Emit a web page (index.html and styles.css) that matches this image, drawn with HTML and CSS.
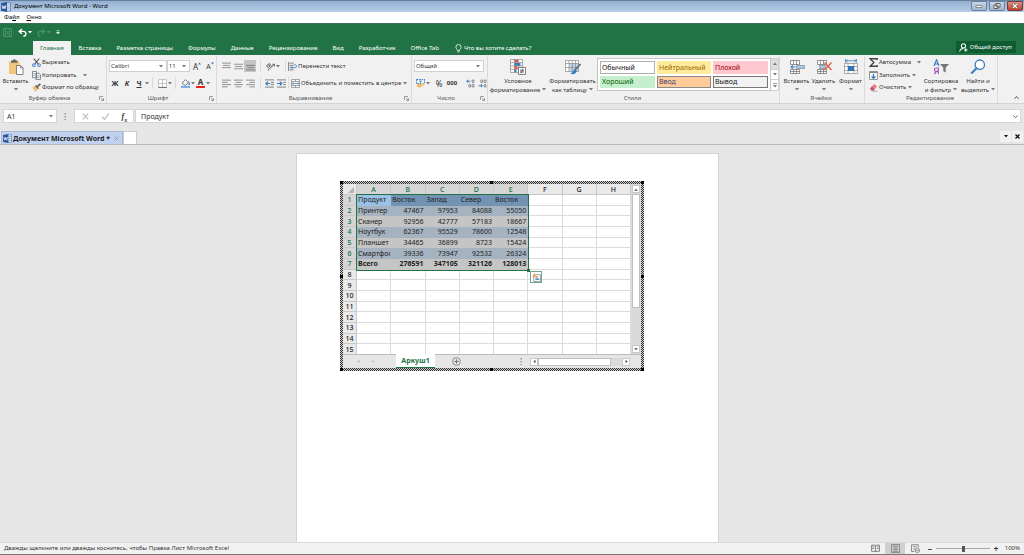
FILE: index.html
```html
<!DOCTYPE html>
<html lang="ru">
<head>
<meta charset="utf-8">
<title>Документ Microsoft Word - Word</title>
<link rel="stylesheet" href="styles.css">
</head>
<body>
<svg class="defs" aria-hidden="true">
  <symbol id="caret" viewBox="0 0 4 3"><path d="M0 0h4L2 2.5z" fill="#777"/></symbol>
  <symbol id="word" viewBox="0 0 10 10"><path d="M5 1h4.5v8H5z" fill="#fff" stroke="#2b579a" stroke-width=".6"/><path d="M6 3h3M6 5h3M6 7h3" stroke="#2b579a" stroke-width=".6"/><path d="M0 1.200 6 0v10L0 8.800z" fill="#2b579a"/><path d="M1 3.300 2 6.800 3 3.800 4 6.800 5 3.300" fill="none" stroke="#fff" stroke-width=".8"/></symbol>
  <symbol id="launch" viewBox="0 0 5 5"><path d="M.5 4V.5H4M2 2l2.300 2.300M4.500 2.200v2.300H2.200" fill="none" stroke="#777" stroke-width=".7"/></symbol>
  <symbol id="cells" viewBox="0 0 16 16"><path d="M1.500 1.500h9v4h-9zM4.500 1.500v4M7.500 1.500v4M1.500 10.500h9v4h-9zM4.500 10.500v4M7.500 10.500v4M1.500 12.500h9" fill="#fff" stroke="#777" stroke-width=".8"/></symbol>
</svg>

<header class="titlebar">
  <svg class="i10"><use href="#word"/></svg>
  <h1 class="title">Документ Microsoft Word - Word</h1>
  <div class="winbtns">
    <button class="winbtn" aria-label="Свернуть"><svg viewBox="0 0 8 6"><path d="M1 2.500h6v2H1z" fill="#fff" stroke="#555" stroke-width=".6"/></svg></button>
    <button class="winbtn" aria-label="Восстановить"><svg viewBox="0 0 8 6"><path d="M3 .5h4v3.500H3zM1 2h4v3.500H1z" fill="#fff" stroke="#444" stroke-width=".8"/></svg></button>
    <button class="winbtn close" aria-label="Закрыть"><svg viewBox="0 0 8 6"><path d="M2 1l4 4M6 1 2 5" stroke="#444" stroke-width="2.200"/><path d="M2 1l4 4M6 1 2 5" stroke="#fff" stroke-width="1.300"/></svg></button>
  </div>
</header>

<nav class="menubar"><button>Фа<u>й</u>л</button><button><u>О</u>кно</button></nav>

<div class="green">
  <div class="qat">
    <button aria-label="Сохранить"><svg class="i8" viewBox="0 0 8 8"><path d="M.5.5h7v7h-7zM2 .5v3h4v-3M2 7.500V5h4v2.500" fill="none" stroke="#5c9a76" stroke-width=".7"/></svg></button>
    <button aria-label="Отменить"><svg class="i8" viewBox="0 0 8 8"><path d="M3.500.8 1 3l2.500 2.200M1.200 3h3.600c3 0 3 4 0 4.300" fill="none" stroke="#fff" stroke-width="1.200"/></svg><svg class="car" viewBox="0 0 4 3"><path d="M0 0h4L2 2.500z" fill="#fff"/></svg></button>
    <button aria-label="Вернуть"><svg class="i8" viewBox="0 0 8 8"><path d="M4.500.8 7 3 4.500 5.200M6.800 3H3.200c-3 0-3 4 0 4.300" fill="none" stroke="#4f9069" stroke-width="1"/></svg><svg class="car" viewBox="0 0 4 3"><path d="M0 0h4L2 2.500z" fill="#4f9069"/></svg></button>
    <button aria-label="Настройка панели"><svg class="car tall" viewBox="0 0 4 5"><path d="M.5.500h3M.5 2.200h3L2 4z" stroke="#fff" stroke-width=".5" fill="#fff"/></svg></button>
  </div>
  <nav class="tabs">
    <button class="tab active">Главная</button>
    <button class="tab">Вставка</button>
    <button class="tab">Разметка страницы</button>
    <button class="tab">Формулы</button>
    <button class="tab">Данные</button>
    <button class="tab">Рецензирование</button>
    <button class="tab">Вид</button>
    <button class="tab">Разработчик</button>
    <button class="tab">Office Tab</button>
    <button class="tab tell"><svg class="i8" viewBox="0 0 8 8"><path d="M3 5.800C3 4.500 1.700 4.300 1.700 2.700a2.300 2.300 0 0 1 4.600 0C6.300 4.300 5 4.500 5 5.800zM3 7h2" fill="none" stroke="#fff" stroke-width=".7"/></svg>Что вы хотите сделать?</button>
    <button class="share"><svg class="i8" viewBox="0 0 8 8"><circle cx="4" cy="2.500" r="1.900" fill="none" stroke="#fff" stroke-width=".9"/><path d="M.7 7.800C.7 5.800 2 4.800 4 4.800M6 4.600v3.200M4.400 6.200h3.200" fill="none" stroke="#fff" stroke-width=".9"/></svg>Общий доступ</button>
  </nav>
</div>

<main class="ribbon">
  <section class="group g-clip">
    <div class="body">
      <button class="big w-paste"><svg class="i16" viewBox="0 0 16 16"><path d="M1 2.500h10.500V15H1z" fill="#f0c67c"/><path d="M3 1.500h1.700a1.600 1.600 0 0 1 3.100 0h1.700v2.300H3z" fill="#666"/><path d="M8.500 6.500h4l2.500 2.500v6.500H8.500z" fill="#fff" stroke="#666" stroke-width=".8"/><path d="M12.500 6.500V9H15" fill="none" stroke="#666" stroke-width=".7"/></svg><span>Вставить</span><svg class="car"><use href="#caret"/></svg></button>
      <div class="list">
        <button><svg class="i8" viewBox="0 0 8 8"><path d="M1.500.5l4.200 5M6.500.5 2.300 5.500" stroke="#555" stroke-width=".9"/><circle cx="1.700" cy="6.300" r="1.200" fill="none" stroke="#4a86c5" stroke-width=".9"/><circle cx="6.300" cy="6.300" r="1.200" fill="none" stroke="#4a86c5" stroke-width=".9"/></svg>Вырезать</button>
        <button><svg class="i8" viewBox="0 0 8 8"><path d="M.5.5H4v5.500H.5zM3.500 2h2.700L7.500 3.300v4.200h-4z" fill="#fff" stroke="#666" stroke-width=".7"/><path d="M1.300 2.300h1.500M1.300 3.800h1.500M4.300 4.300h2.400M4.300 5.800h2.400" stroke="#4a86c5" stroke-width=".6"/></svg>Копировать<svg class="car far"><use href="#caret"/></svg></button>
        <button><svg class="i8" viewBox="0 0 8 8"><path d="M.3 4 3 2.200l2.500 3L3.200 7.800z" fill="#f0c06c"/><path d="M3.200 2.200 5.800 5" stroke="#555" stroke-width="1.300"/><path d="M5 3 7.500.8" stroke="#555" stroke-width="1.400"/></svg>Формат по образцу</button>
      </div>
    </div>
    <footer><h2>Буфер обмена</h2><svg class="i5"><use href="#launch"/></svg></footer>
  </section>

  <section class="group g-font">
    <div class="body rows">
      <div class="row">
        <span class="sel w59"><select aria-label="Шрифт"><option>Calibri</option></select><svg class="car"><use href="#caret"/></svg></span><span class="sel w23"><select aria-label="Размер"><option>11</option></select><svg class="car"><use href="#caret"/></svg></span>
        <button class="ib grow">A<svg class="i3" viewBox="0 0 3 3"><path d="M0 2.500 1.500.5 3 2.500z" fill="#3a7cc0"/></svg></button><button class="ib grow small">A<svg class="i3" viewBox="0 0 3 3"><path d="M0 .5h3L1.500 2.500z" fill="#3a7cc0"/></svg></button>
      </div>
      <div class="row">
        <button class="ib b">Ж</button><button class="ib b it">К</button><button class="ib b un">Ч</button><svg class="car"><use href="#caret"/></svg><i class="sep"></i>
        <button class="ib" aria-label="Границы"><svg class="i8" viewBox="0 0 8 8"><path d="M.5.5h7v7h-7zM4 .5v7M.5 4h7" fill="#fff" stroke="#aaa" stroke-width=".6"/><path d="M.3 7.500h7.400" stroke="#666" stroke-width=".8"/></svg></button><svg class="car"><use href="#caret"/></svg><i class="sep"></i>
        <button class="ib" aria-label="Заливка"><svg class="i8" viewBox="0 0 8 8"><path d="M1 3.500 4 .7l2.700 2.600-3 2.400z" fill="#fff" stroke="#666" stroke-width=".8"/><path d="M6.300 2.500c1.300.5 1.400 2 .8 3" fill="none" stroke="#4a86c5"/><path d="M0 6h8v2H0z" fill="#7fb2e0"/></svg></button><svg class="car"><use href="#caret"/></svg>
        <button class="ib fc" aria-label="Цвет текста">A</button><svg class="car"><use href="#caret"/></svg>
      </div>
    </div>
    <footer><h2>Шрифт</h2><svg class="i5"><use href="#launch"/></svg></footer>
  </section>

  <section class="group g-align">
    <div class="body rows">
      <div class="row">
        <button class="ib" aria-label="Вверх"><svg class="i8" viewBox="0 0 8 8"><path d="M0 1h8M1 3h6M0 5h8" stroke="#888" stroke-width=".8"/></svg></button><button class="ib" aria-label="Середина"><svg class="i8" viewBox="0 0 8 8"><path d="M0 2h8M1 4h6M0 6h8" stroke="#888" stroke-width=".8"/></svg></button><button class="ib on" aria-label="Вниз"><svg class="i8" viewBox="0 0 8 8"><path d="M0 3h8M1 5h6M0 7h8" stroke="#777" stroke-width=".8"/></svg></button><i class="sep"></i>
        <button class="ib" aria-label="Ориентация"><svg class="i8" viewBox="0 0 8 8"><path d="M1.500 7.500 7.500 2M7.500 4V2h-2" fill="none" stroke="#777" stroke-width=".9"/><circle cx="2" cy="3.500" r="1.200" fill="none" stroke="#555" stroke-width=".8"/><path d="M2.500.8 5 4" stroke="#555" stroke-width=".8"/></svg></button><svg class="car"><use href="#caret"/></svg><i class="sep push"></i>
        <button class="txt"><svg class="i8" viewBox="0 0 8 8"><path d="M.5 0v8M1.500 1H5M1.500 3H5M1.500 7H5" stroke="#777" stroke-width=".8"/><path d="M1.500 5h5c1.500 0 1.500-2.500 0-2.500H5.500M4 3.800 2.500 5 4 6.200" fill="none" stroke="#4a86c5" stroke-width=".8"/></svg>Перенести текст</button>
      </div>
      <div class="row">
        <button class="ib" aria-label="Влево"><svg class="i8" viewBox="0 0 8 8"><path d="M0 1h8M0 3h5M0 5h8M0 7h5" stroke="#888" stroke-width=".8"/></svg></button><button class="ib" aria-label="По центру"><svg class="i8" viewBox="0 0 8 8"><path d="M0 1h8M1.500 3h5M0 5h8M1.500 7h5" stroke="#888" stroke-width=".8"/></svg></button><button class="ib" aria-label="Вправо"><svg class="i8" viewBox="0 0 8 8"><path d="M0 1h8M3 3h5M0 5h8M3 7h5" stroke="#888" stroke-width=".8"/></svg></button><i class="sep"></i>
        <button class="ib" aria-label="Уменьшить отступ"><svg class="i8" viewBox="0 0 8 8"><path d="M0 .8h8M5 3h3M5 5h3M0 7.200h8" stroke="#777" stroke-width=".8"/><path d="M4.500 4H1M2.500 2.300.7 4l1.800 1.700" fill="none" stroke="#3a7cc0" stroke-width="1.100"/></svg></button><button class="ib" aria-label="Увеличить отступ"><svg class="i8" viewBox="0 0 8 8"><path d="M0 .8h8M5.500 3H8M5.500 5H8M0 7.200h8" stroke="#777" stroke-width=".8"/><path d="M0 4h4M2.500 2.300 4.300 4 2.500 5.700" fill="none" stroke="#3a7cc0" stroke-width="1.100"/></svg></button><i class="sep push"></i>
        <button class="txt"><svg class="i8" viewBox="0 0 8 8"><path d="M.5.5h7v7h-7zM.5 2.300h7M.5 5.700h7M4 .5v1.800M4 5.700v1.800" fill="#fff" stroke="#888" stroke-width=".7"/><path d="M1 4h6M2 3 1 4l1 1M6 3l1 1-1 1" fill="none" stroke="#4a86c5" stroke-width=".7"/></svg>Объединить и поместить в центре<svg class="car far"><use href="#caret"/></svg></button>
      </div>
    </div>
    <footer><h2>Выравнивание</h2><svg class="i5"><use href="#launch"/></svg></footer>
  </section>

  <section class="group g-num">
    <div class="body rows">
      <div class="row"><span class="sel fill"><select aria-label="Формат числа"><option>Общий</option></select><svg class="car"><use href="#caret"/></svg></span></div>
      <div class="row">
        <button class="ib" aria-label="Денежный"><svg class="i8" viewBox="0 0 8 8"><path d="M.5.5h7v3.500h-7z" fill="#fff" stroke="#4a86c5" stroke-dasharray="1.500 .7"/><circle cx="4" cy="2.300" r="1" fill="#4a86c5"/><ellipse cx="3" cy="6" rx="2.300" ry="1.500" fill="#efb75c"/><ellipse cx="6" cy="5" rx="1.700" ry="1.200" fill="#f4cd86"/></svg></button><svg class="car"><use href="#caret"/></svg><button class="ib pct">%</button><button class="ib zer">000</button><i class="sep"></i>
        <button class="ib" aria-label="Увеличить разрядность"><svg class="i8" viewBox="0 0 8 8"><path d="M4 2H.8M2 .8.7 2 2 3.200" fill="none" stroke="#4a86c5" stroke-width=".9"/><ellipse cx="6.300" cy="2" rx=".9" ry="1.300" fill="none" stroke="#666" stroke-width=".7"/><ellipse cx="3.300" cy="6" rx=".9" ry="1.300" fill="none" stroke="#666" stroke-width=".7"/><ellipse cx="6.300" cy="6" rx=".9" ry="1.300" fill="none" stroke="#666" stroke-width=".7"/></svg></button>
        <button class="ib" aria-label="Уменьшить разрядность"><svg class="i8" viewBox="0 0 8 8"><path d="M.5 6h3.200M2.500 4.800 3.800 6 2.500 7.200" fill="none" stroke="#4a86c5" stroke-width=".9"/><ellipse cx="6.300" cy="2" rx=".9" ry="1.300" fill="none" stroke="#666" stroke-width=".7"/><ellipse cx="3.300" cy="2" rx=".9" ry="1.300" fill="none" stroke="#666" stroke-width=".7"/><ellipse cx="6.300" cy="6" rx=".9" ry="1.300" fill="none" stroke="#666" stroke-width=".7"/></svg></button>
      </div>
    </div>
    <footer><h2>Число</h2><svg class="i5"><use href="#launch"/></svg></footer>
  </section>

  <section class="group g-style">
    <div class="body">
      <button class="big w-cond"><svg class="i16" viewBox="0 0 16 16"><path d="M.5.5h12v13H.5zM.5 3.700h12M.5 7h12M.5 10.300h12M4.500.5v13M8.500.5v13" fill="#fff" stroke="#888" stroke-width=".7"/><path d="M4.500.8h3.500v2.600H4.500zM4.500 7.300h3v2.700h-3z" fill="#e0584a"/><path d="M4.500 4h6v2.700h-6zM4.500 10.600h2v2.700h-2z" fill="#3a7cc0"/><path d="M8.500 8.500h7v7h-7z" fill="#fff" stroke="#666" stroke-width=".8"/><path d="M10 11.200h4M10 13h4M13 9.800l-2 4.600" stroke="#444" stroke-width=".8"/></svg><span>Условное<br>форматирование<svg class="car"><use href="#caret"/></svg></span></button>
      <button class="big w-tbl"><svg class="i16" viewBox="0 0 16 16"><path d="M.5 1.500h13v11H.5z" fill="#fff"/><path d="M4.500 4.500h9v8h-9z" fill="#b8d3ec"/><path d="M.5 1.500h13v11H.5zM.5 4.500h13M.5 8.500h13M4 1.500v11M7.300 1.500v11M10.500 1.500v11" fill="none" stroke="#888" stroke-width=".7"/><path d="M15.500 5 9.500 11.500" stroke="#666" stroke-width="1.600"/><path d="M10.300 10.500c-2 0-2 2.500-4.800 4 2 1.500 6 .5 6.200-2.500z" fill="#3a7cc0"/></svg><span>Форматировать<br>как таблицу<svg class="car"><use href="#caret"/></svg></span></button>
      <div class="gallery">
        <button class="st normal">Обычный</button><button class="st neutral">Нейтральный</button><button class="st bad">Плохой</button>
        <button class="st good">Хороший</button><button class="st input">Ввод</button><button class="st output">Вывод</button>
      </div>
      <div class="gscroll"><button class="off" aria-label="Вверх"><svg class="car up"><use href="#caret"/></svg></button><button aria-label="Вниз"><svg class="car"><use href="#caret"/></svg></button><button aria-label="Ещё"><svg class="car tall" viewBox="0 0 4 5"><path d="M0 .5h4" stroke="#777" stroke-width=".7"/><path d="M0 2h4L2 4.500z" fill="#777"/></svg></button></div>
    </div>
    <footer><h2>Стили</h2></footer>
  </section>

  <section class="group g-cells">
    <div class="body">
      <button class="big w-cell"><svg class="i16"><use href="#cells"/><path d="M7.500 6.500h8v3h-8z" fill="#a9c8e6" stroke="#7a8a9a" stroke-width=".7"/><path d="M6.500 8H2M3.800 6.300 2 8l1.800 1.700" fill="none" stroke="#3a7cc0" stroke-width="1.100"/></svg><span>Вставить</span><svg class="car"><use href="#caret"/></svg></button>
      <button class="big w-cell"><svg class="i16"><use href="#cells"/><path d="M3.500 6.500h6v3h-6z" fill="#a9c8e6" stroke="#7a8a9a" stroke-width=".7"/><path d="M8.500 3.500l7 7.500M15.500 3.500 8.500 11" stroke="#e06048" stroke-width="1.400"/></svg><span>Удалить</span><svg class="car"><use href="#caret"/></svg></button>
      <button class="big w-cell"><svg class="i16" viewBox="0 0 16 16"><path d="M1.500 4.500h13v10h-13zM1.500 7.500h13M1.500 11.500h13M5 4.500v10M11 4.500v10" fill="#fff" stroke="#888" stroke-width=".7"/><path d="M5 7h6v5H5z" fill="#2f75b5"/><path d="M3 1.800h10M4.500.5 3 1.800l1.500 1.300M11.500.5 13 1.800l-1.500 1.300M2.500 0v3.500M13.500 0v3.500" fill="none" stroke="#3a7cc0" stroke-width=".8"/></svg><span>Формат</span><svg class="car"><use href="#caret"/></svg></button>
    </div>
    <footer><h2>Ячейки</h2></footer>
  </section>

  <section class="group g-edit">
    <div class="body">
      <div class="list">
        <button><svg class="i8" viewBox="0 0 8 8"><path d="M7.300 1.800V.7H1L4.300 4 1 7.300h6.300V6.200" fill="none" stroke="#444" stroke-width="1.200"/></svg>Автосумма<svg class="car far"><use href="#caret"/></svg></button>
        <button><svg class="i8" viewBox="0 0 8 8"><path d="M.5.5h7v7h-7z" fill="#fff" stroke="#888" stroke-width=".8"/><path d="M.5.500h7v1.300h-7z" fill="#888"/><path d="M4 2.500v4M2.300 4.800 4 6.500l1.700-1.700" fill="none" stroke="#3a7cc0" stroke-width="1.200"/></svg>Заполнить<svg class="car"><use href="#caret"/></svg></button>
        <button><svg class="i8" viewBox="0 0 8 8"><path d="M1 4.800 4.500.8l2.700 2L4 6.700H2z" fill="#e8788a"/><path d="M1 4.800 2.500 3.200 5 5.500 4 6.700H2z" fill="#c8506a"/><path d="M3 7.300h4.500" stroke="#888" stroke-width=".6"/></svg>Очистить<svg class="car"><use href="#caret"/></svg></button>
      </div>
      <button class="big w-sort"><svg class="i16" viewBox="0 0 16 16"><path d="M1 7 3.500.8 6 7M1.900 5h3.200" fill="none" stroke="#3a7cc0" stroke-width="1.200"/><path d="M5.300 15V9H3.200c-2.400 0-2.400 3.300 0 3.300h2.100M3.500 12.300 1.300 15" fill="none" stroke="#9b59b6" stroke-width="1.200"/><path d="M7 5h9l-3.300 3.800v4.700l-2.400-1.200V8.800z" fill="#777"/></svg><span>Сортировка<br>и фильтр<svg class="car"><use href="#caret"/></svg></span></button>
      <button class="big w-find"><svg class="i16" viewBox="0 0 16 16"><circle cx="9.800" cy="5.700" r="4.700" fill="#fff" stroke="#3a7cc0" stroke-width="1.300"/><path d="M6.500 9.200 1.300 14.500" stroke="#3a7cc0" stroke-width="2"/></svg><span>Найти и<br>выделить<svg class="car"><use href="#caret"/></svg></span></button>
    </div>
    <footer><h2>Редактирование</h2></footer>
  </section>
  <button class="collapse" aria-label="Свернуть ленту"><svg class="i5" viewBox="0 0 5 5"><path d="M.5 3.800 2.500 1.500l2 2.300" fill="none" stroke="#555"/></svg></button>
</main>

<div class="formula">
  <div class="box name"><input aria-label="Имя" value="A1"><svg class="car"><use href="#caret"/></svg></div>
  <span class="grip"></span>
  <div class="box fx">
    <button aria-label="Отмена"><svg class="i8" viewBox="0 0 8 8"><path d="M1.500 1.500l5 5M6.500 1.500l-5 5" stroke="#bbb"/></svg></button>
    <button aria-label="Ввод"><svg class="i8" viewBox="0 0 8 8"><path d="M1 4.500 3 6.500 7 1.500" fill="none" stroke="#bbb" stroke-width="1.100"/></svg></button>
    <button class="fxb">f<sub>x</sub></button>
  </div>
  <div class="box expr"><input aria-label="Строка формул" value="Продукт"><svg class="i5" viewBox="0 0 5 5"><path d="M.5 1.500 2.500 3.800l2-2.300" fill="none" stroke="#666"/></svg></div>
</div>

<div class="doctabs">
  <button class="doctab"><svg class="i8 doc" viewBox="0 0 10 10"><use href="#word"/></svg>Документ Microsoft Word *<svg class="i5" viewBox="0 0 5 5"><path d="M.5.5l4 4M4.500.5l-4 4" stroke="#9aa3b5"/></svg></button>
  <button class="newtab" aria-label="Новая вкладка"></button>
  <button class="dt" aria-label="Список"><svg class="car" viewBox="0 0 4 3"><path d="M0 0h4L2 2.500z" fill="#111"/></svg></button>
  <button class="dt" aria-label="Закрыть"><svg class="i5" viewBox="0 0 5 5"><path d="M.5.5l4 4M4.500.5l-4 4" stroke="#111" stroke-width="1.300"/></svg></button>
</div>

<div class="canvas">
  <article class="page">
    <div class="object">
      <div class="sheet">
        <div class="gridwrap">
          <table class="grid">
            <thead><tr><th class="corner"><svg viewBox="0 0 14 11"><path d="M12 3v7H5z" fill="#b5b5b5"/></svg></th><th class="s">A</th><th class="s">B</th><th class="s">C</th><th class="s">D</th><th class="s">E</th><th>F</th><th>G</th><th>H</th></tr></thead>
            <tbody>
              <tr class="head"><th class="s">1</th><td class="cur">Продукт</td><td>Восток</td><td>Запад</td><td>Север</td><td>Восток</td><td></td><td></td><td></td></tr>
              <tr class="blue"><th class="s">2</th><td>Принтер</td><td>47467</td><td>97953</td><td>84088</td><td>55050</td><td></td><td></td><td></td></tr>
              <tr class="gray"><th class="s">3</th><td>Сканер</td><td>92956</td><td>42777</td><td>57183</td><td>18667</td><td></td><td></td><td></td></tr>
              <tr class="blue"><th class="s">4</th><td>Ноутбук</td><td>62367</td><td>95529</td><td>78600</td><td>12548</td><td></td><td></td><td></td></tr>
              <tr class="gray"><th class="s">5</th><td>Планшет</td><td>34465</td><td>36899</td><td>8723</td><td>15424</td><td></td><td></td><td></td></tr>
              <tr class="blue"><th class="s">6</th><td>Смартфон</td><td>39336</td><td>73947</td><td>92532</td><td>26324</td><td></td><td></td><td></td></tr>
              <tr class="gray total"><th class="s">7</th><td>Всего</td><td>276591</td><td>347105</td><td>321126</td><td>128013</td><td></td><td></td><td></td></tr>
              <tr><th>8</th><td></td><td></td><td></td><td></td><td></td><td></td><td></td><td></td></tr>
              <tr><th>9</th><td></td><td></td><td></td><td></td><td></td><td></td><td></td><td></td></tr>
              <tr><th>10</th><td></td><td></td><td></td><td></td><td></td><td></td><td></td><td></td></tr>
              <tr><th>11</th><td></td><td></td><td></td><td></td><td></td><td></td><td></td><td></td></tr>
              <tr><th>12</th><td></td><td></td><td></td><td></td><td></td><td></td><td></td><td></td></tr>
              <tr><th>13</th><td></td><td></td><td></td><td></td><td></td><td></td><td></td><td></td></tr>
              <tr><th>14</th><td></td><td></td><td></td><td></td><td></td><td></td><td></td><td></td></tr>
              <tr><th>15</th><td></td><td></td><td></td><td></td><td></td><td></td><td></td><td></td></tr>
            </tbody>
          </table>
          <div class="selection"></div>
          <button class="quick" aria-label="Быстрый анализ"><svg class="i8" viewBox="0 0 8 8"><path d="M1.500 1.500h6v6h-6z" fill="#fff" stroke="#888" stroke-width=".7"/><path d="M3 3.500h2" stroke="#e0584a" stroke-width="1.200"/><path d="M3 5.500h3.500" stroke="#3a7cc0" stroke-width="1.200"/><path d="M2.500 0 .3 3h1.500L1 5l2.500-3H2z" fill="#f0a030"/></svg></button>
        </div>
        <div class="vscroll"><button aria-label="Вверх"><svg class="car up"><use href="#caret"/></svg></button><i class="thumb"></i><button aria-label="Вниз"><svg class="car"><use href="#caret"/></svg></button></div>
      </div>
      <div class="sheetbar">
        <span class="arrows"><svg class="i5" viewBox="0 0 5 5"><path d="M3.500 1v3L1.500 2.500z" fill="#b5b5b5"/></svg><svg class="i5" viewBox="0 0 5 5"><path d="M1.500 1v3l2-1.500z" fill="#b5b5b5"/></svg></span>
        <button class="sheettab">Аркуш1</button>
        <button class="add" aria-label="Новый лист"><svg viewBox="0 0 9 9"><circle cx="4.500" cy="4.500" r="3.900" fill="none" stroke="#777" stroke-width=".8"/><path d="M4.500 2.300v4.400M2.300 4.500h4.400" stroke="#777"/></svg></button>
        <span class="grip"></span>
        <div class="hscroll"><button aria-label="Влево"><svg class="i5" viewBox="0 0 5 5"><path d="M3.500.7v3.600L1.300 2.500z" fill="#555"/></svg></button><i class="thumb"></i><button aria-label="Вправо"><svg class="i5" viewBox="0 0 5 5"><path d="M1.500.7v3.600l2.200-1.800z" fill="#555"/></svg></button></div>
      </div>
      <i class="h nw"></i><i class="h n"></i><i class="h ne"></i><i class="h w"></i><i class="h e"></i><i class="h sw"></i><i class="h so"></i><i class="h se"></i>
    </div>
  </article>
</div>

<footer class="status">
  <span class="hint">Дважды щелкните или дважды коснитесь, чтобы Правка Лист Microsoft Excel</span>
  <button class="view" aria-label="Чтение"><svg class="i8" viewBox="0 0 8 8"><path d="M.5 1h3l.5.5.5-.5h3v5.500h-3L4 7.200l-.5-.7h-3zM4 1.500v5.500M1.200 2.500h1.600M1.200 4h1.600M5.200 2.500h1.600M5.200 4h1.600" fill="none" stroke="#777" stroke-width=".8"/></svg></button>
  <button class="view on" aria-label="Разметка"><svg class="i8" viewBox="0 0 8 8"><path d="M.5.5h7v7h-7zM2 2h4M2 3.500h4M2 5h4M2 6.500h4" fill="none" stroke="#777" stroke-width=".7"/></svg></button>
  <button class="view" aria-label="Веб-документ"><svg class="i8" viewBox="0 0 8 8"><path d="M6.500 3V.7h-6v6H3M2 2.500h3M2 4.500h1.500" fill="none" stroke="#777" stroke-width=".8"/><circle cx="5.700" cy="5.700" r="1.900" fill="none" stroke="#777" stroke-width=".7"/><path d="M4 5.700h3.400" stroke="#777" stroke-width=".6"/></svg></button>
  <button class="pm">−</button><input class="zoom" type="range" min="0" max="200" value="100" aria-label="Масштаб"><button class="pm">+</button>
  <output class="pctv">100%</output>
</footer>
</body>
</html>
```
FILE: styles.css
```css
* { box-sizing: border-box; }
body {
  margin: 0;
  height: 100vh;
  display: flex;
  flex-direction: column;
  overflow: hidden;
  background: #e6e6e6;
  color: #333;
  font: 6px/9px "Noto Sans", "Open Sans", sans-serif;
}
h1, h2 { margin: 0; font: inherit; }
button, input, select {
  margin: 0;
  padding: 0;
  border: 0;
  background: none;
  color: inherit;
  font: inherit;
}
svg { display: block; flex: none; }
.defs { display: none; }
.i3 { width: 3px; height: 3px; }
.i5 { width: 5px; height: 5px; }
.i8 { width: 9px; height: 9px; }
.i10 { width: 10px; height: 10px; }
.i16 { width: 16px; height: 16px; }
.car { width: 4px; height: 3px; }
.car.tall { height: 5px; }
.car.up { transform: rotate(180deg); }

/* title and menu */
.titlebar {
  display: flex;
  align-items: center;
  gap: 3px;
  height: 12px;
  padding-left: 1px;
  border-top: 1px solid #66809f;
  background: linear-gradient(#93aed0, #b7cfe9);
  color: #000;
}
.title { flex: 1; }
.winbtns { display: flex; gap: 2px; align-self: flex-start; padding-right: 1px; }
.winbtn {
  width: 16px;
  height: 10px;
  display: grid;
  place-items: center;
  border: 1px solid #6f829a;
  border-radius: 0 0 2px 2px;
  background: linear-gradient(#c9d7e8, #9fb4ce);
}
.winbtn svg { width: 8px; height: 6px; }
.winbtn.close { background: linear-gradient(#dd9080, #c2402a); border-color: #7a3a35; }
.menubar {
  display: flex;
  align-items: center;
  gap: 7px;
  height: 11px;
  padding-left: 4px;
  background: #fff;
  color: #000;
}

/* green header */
.green { background: #217346; color: #fff; border-top: 1px solid #3e6e55; }
.qat { display: flex; align-items: center; gap: 5px; height: 17px; padding: 0 3px; }
.qat button { display: flex; align-items: center; gap: 1px; }
.qat button:first-child { margin-right: 1px; }
.tabs { display: flex; gap: 1px; height: 14px; padding: 0 8px 0 33px; }
.tab { padding: 0 7px; white-space: nowrap; }
.tab.active { background: #f1f1f1; color: #217346; }
.tell, .share { display: flex; align-items: center; gap: 1px; }
.share { margin-left: auto; padding: 0 4px 0 3px; gap: 2px; background: #0f5c32; height: 12px; }

/* ribbon */
.ribbon { display: flex; height: 49px; background: #f1f1f1; border-bottom: 1px solid #d2d2d2; }
.group {
  display: flex;
  flex-direction: column;
  flex: none;
  margin-top: 1px;
  border-right: 1px solid #dadada;
}
.group .body { flex: 1; display: flex; min-height: 0; }
.group footer { display: flex; align-items: center; height: 9px; padding-right: 2px; color: #555; }
.group h2 { flex: 1; text-align: center; }
.g-clip { width: 107px; }
.g-font { width: 110px; }
.g-align { width: 195px; }
.g-num { width: 76px; }
.g-style { width: 292px; }
.g-cells { width: 85px; }
.g-edit { width: 133px; }
.big { display: flex; flex-direction: column; align-items: center; flex: none; padding-top: 3px; white-space: nowrap; }
.big > span { padding-top: 2px; text-align: center; }
.big > .car { margin-top: 2px; }
.big span .car { display: inline-block; margin-left: 2px; vertical-align: 1px; }
.w-paste { width: 31px; }
.w-cond { width: 60px; }
.w-tbl { width: 49px; }
.g-cells .body { padding-left: 3px; }
.w-cell { width: 27px; }
.w-sort { width: 38px; margin-left: 5px; }
.w-find { width: 36px; }
.list { display: flex; flex-direction: column; height: 38px; }
.list button { display: flex; align-items: center; flex: 1; gap: 1px; padding-left: 1px; white-space: nowrap; }
.car.far { margin-left: 5px; }
.list .car:not(.far) { margin-left: 1px; }
.g-edit .list { padding-left: 3px; width: 52px; }
.group .rows { flex-direction: column; gap: 3px; padding: 3px 0 0 2px; }
.g-align .rows { padding-left: 3px; }
.row { display: flex; align-items: center; height: 14px; }
.ib { width: 12px; height: 12px; display: grid; place-items: center; flex: none; }
.ib.on { background: #c6c6c6; }
.ib.b { font-size: 7px; font-weight: 700; }
.ib.it { font-style: italic; }
.ib.un { text-decoration: underline; }
.ib.grow { display: flex; align-items: center; justify-content: center; font-size: 8px; margin-left: 1px; }
.ib.grow.small { font-size: 7px; }
.grow .i3 { align-self: flex-start; margin-top: 2px; }
.ib.fc { font-weight: 700; font-size: 8px; line-height: 8px; height: 10px; border-bottom: 2px solid #e22; width: 9px; margin: 0 1px; }
.ib.zer { font-weight: 700; }
.ib.pct { font-size: 8px; margin: 0 1px 0 3px; }
.sep { width: 1px; height: 12px; margin: 0 3px; background: #dadada; }
.g-align .row .sep { margin: 0 3px 0 4px; }
.g-align .row .push { margin: 0 2px 0 auto; }
.g-align .txt { width: 123px; }
.txt { display: flex; align-items: center; gap: 1px; white-space: nowrap; }
.txt .far { margin-left: auto; margin-right: 4px; }
.sel { display: flex; align-items: center; height: 12px; padding-right: 3px; background: #fff; border: 1px solid #d0d0d0; }
.sel select { appearance: none; flex: 1; min-width: 0; padding-left: 1px; }
.w59 { width: 60px; }
.w23 { width: 24px; }
.g-num .rows { padding-right: 3px; }
.fill { flex: 1; }
.gallery {
  display: grid;
  grid-template-columns: 55px 54px 55px;
  gap: 2px;
  padding: 2px;
  height: 33px;
  margin-top: 2px;
  background: #fff;
  border: 1px solid #c6c6c6;
  font-size: 7px;
}
.st { padding-left: 1px; text-align: left; border: 1px solid transparent; white-space: nowrap; }
.normal { border: 1px solid #b0b0b0; color: #111; }
.neutral { background: #ffeb9c; color: #9c6500; }
.bad { background: #ffc7ce; color: #9c0006; }
.good { background: #c6efce; color: #006100; }
.input { background: #ffcc99; color: #3f3f76; border-color: #8a8a8a; }
.output { background: #f2f2f2; color: #222; border-color: #777; }
.gscroll { display: flex; flex-direction: column; width: 8px; height: 33px; margin-top: 2px; border: 1px solid #d0d0d0; border-left: 0; background: #fff; }
.gscroll button { flex: 1; display: grid; place-items: center; }
.gscroll button + button { border-top: 1px solid #d0d0d0; }
.gscroll .off { background: #ddd; }
.collapse { margin-left: auto; align-self: flex-end; padding: 0 5px 3px; }

/* formula bar */
.formula { display: flex; height: 27px; padding: 5px 3px 8px; font-size: 7px; }
.box { display: flex; align-items: center; background: #fff; border: 1px solid #d6d6d6; }
.box input { flex: 1; min-width: 0; padding: 0 3px; outline: 0; }
.name { width: 54px; padding-right: 3px; }
.grip { width: 17px; align-self: center; height: 7px; background: radial-gradient(circle, #aaa 0 1px, transparent 1px) center / 17px 3px; }
.fx { width: 60px; justify-content: space-around; }
.fxb { font: italic 700 8px/9px "Liberation Serif", serif; }
.fxb sub { font-size: 6px; line-height: 0; }
.expr { flex: 1; margin-left: 1px; padding-right: 2px; }
.expr input { padding-left: 5px; }

/* document tabs */
.doctabs { display: flex; height: 14px; padding: 0 1px 0 1px; border-bottom: 1px solid #b9b9b9; }
.doctab { display: flex; align-items: center; gap: 1px; padding: 0 3px 0 1px; background: #c0d2f0; border: 1px solid #a9b8d4; border-bottom: 0; color: #222; font-size: 7px; font-weight: 700; white-space: nowrap; }
.doctab .i5 { margin-left: 3px; }
.newtab { width: 14px; margin: 0 auto 0 0; background: #fff; border: 1px solid #ccc; border-bottom: 0; }
.dt { width: 11px; height: 11px; display: grid; place-items: center; background: #f2f2f2; margin-left: 1px; }

/* document */
.canvas { flex: 1; min-height: 0; padding-top: 8px; padding-right: 9px; display: flex; justify-content: center; }
.page { width: 423px; background: #fff; border: 1px solid #d4d4d4; border-bottom: 0; padding: 27px 43px; }
.object { position: relative; width: 304px; padding: 3px; background: repeating-conic-gradient(#333 0 25%, #ccc 0 50%) 0 0 / 2px 2px; }
.h { position: absolute; width: 3px; height: 3px; background: #000; }
.nw, .n, .ne { top: 0; }
.sw, .so, .se { bottom: 0; }
.nw, .w, .sw { left: 0; }
.ne, .e, .se { right: 0; }
.n, .so { left: 150px; }
.w, .e { top: 94px; }
.sheet { display: flex; height: 170px; background: #e6e6e6; font-size: 7px; }
.gridwrap { position: relative; flex: 1; overflow: hidden; }
.grid { width: 288px; height: 171px; table-layout: fixed; border-collapse: separate; border-spacing: 0; color: #222; }
.grid th, .grid td { padding: 0 1px; height: 10px; line-height: 9px; overflow: hidden; white-space: nowrap; border-right: 1px solid #dcdcdc; border-bottom: 1px solid #dcdcdc; }
.grid td { background: #fff; text-align: right; }
.grid td:nth-child(2), .head td { text-align: left; }
.grid th { background: #e9e9e9; font-weight: 500; text-align: center; padding: 0; border-color: #c8c8c8; }
.grid th:first-child { width: 14px; }
.grid th.s { background: #d5d5d5; color: #217346; }
.corner svg { width: 13px; height: 10px; }
.grid .head td:nth-child(-n+6) { background: #7393b3; border-color: #7393b3; }
.grid .head td.cur { background: #9bc2e6; border-color: #9bc2e6; }
.grid .blue td:nth-child(-n+6) { background: #a5b3c1; border-color: #a5b3c1; }
.grid .gray td:nth-child(-n+6) { background: #c5c5c5; border-color: #c5c5c5; }
.total td { font-weight: 700; }
.selection { position: absolute; left: 13px; top: 10px; width: 173px; height: 77px; border: 1px solid #217346; }
.selection::after { content: ""; position: absolute; right: -2px; bottom: -2px; width: 3px; height: 3px; background: #217346; }
.quick { position: absolute; left: 187px; top: 87px; width: 12px; height: 12px; display: grid; place-items: center; background: #fff; border: 1px solid #6fa588; }
.vscroll { display: flex; flex-direction: column; width: 10px; padding: 1px; background: #dadada; }
.vscroll button, .hscroll button { width: 8px; height: 8px; display: grid; place-items: center; background: #fff; border: 1px solid #c8c8c8; }
.thumb { background: #fff; border: 1px solid #c0c0c0; }
.vscroll .thumb { height: 114px; margin: 1px 0 auto; }
.sheetbar { display: flex; align-items: center; height: 14px; background: #e6e6e6; border-top: 1px solid #bdbdbd; }
.arrows { display: flex; gap: 10px; width: 53px; padding-left: 13px; }
.sheettab { align-self: stretch; width: 39px; background: #fff; color: #217346; font-size: 7px; font-weight: 700; border-bottom: 1px solid #217346; margin-top: -1px; }
.add { margin: 0 auto 0 17px; }
.add svg { width: 9px; height: 9px; }
.hscroll { display: flex; width: 100px; margin-right: 11px; background: #dadada; }
.hscroll .thumb { width: 73px; margin-right: auto; }

/* status bar */
.status { display: flex; align-items: center; height: 13px; padding: 0 4px; background: #f1f1f1; border-top: 1px solid #dadada; border-bottom: 1px solid #777; }
.hint { flex: 1; }
.view { width: 20px; height: 11px; display: grid; place-items: center; }
.view.on { background: #cfcfcf; }
.pm { width: 10px; font-size: 8px; font-weight: 700; }
.zoom { appearance: none; width: 54px; height: 9px; margin: 0 1px; background: linear-gradient(#aaa, #aaa) center / 100% 1px no-repeat; }
.zoom::-webkit-slider-thumb { appearance: none; width: 3px; height: 6px; background: #555; }
.pctv { width: 19px; text-align: right; }
```
